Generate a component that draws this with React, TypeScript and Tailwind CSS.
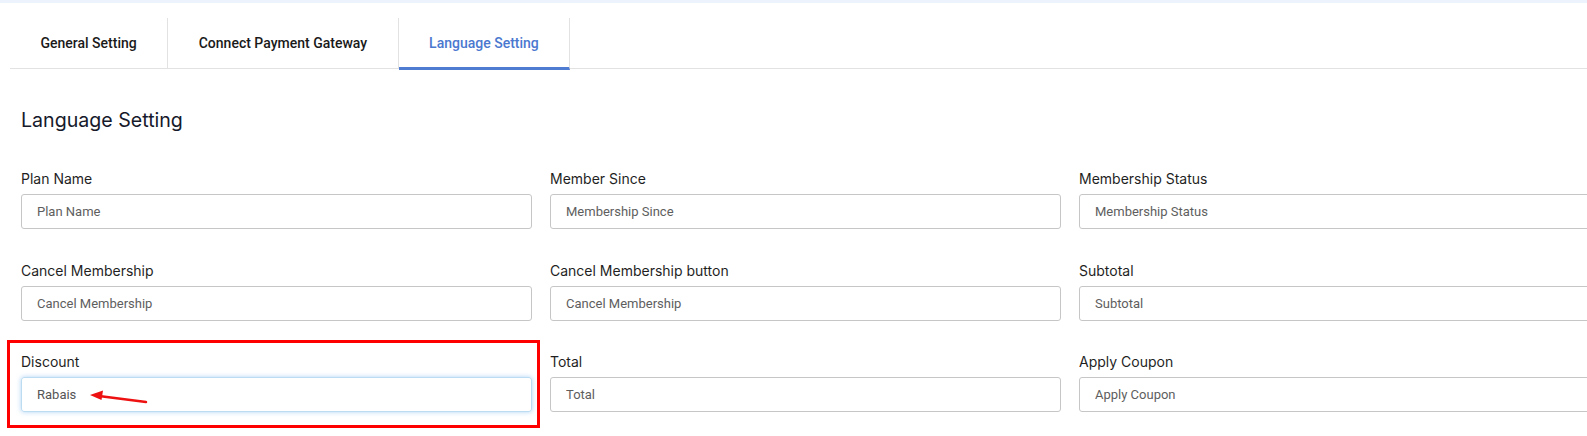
import React from 'react';

type Field = { label: string; placeholder: string; value?: string };

const fields: Field[] = [
  { label: 'Plan Name', placeholder: 'Plan Name' },
  { label: 'Member Since', placeholder: 'Membership Since' },
  { label: 'Membership Status', placeholder: 'Membership Status' },
  { label: 'Cancel Membership', placeholder: 'Cancel Membership' },
  { label: 'Cancel Membership button', placeholder: 'Cancel Membership' },
  { label: 'Subtotal', placeholder: 'Subtotal' },
  { label: 'Discount', placeholder: 'Discount', value: 'Rabais' },
  { label: 'Total', placeholder: 'Total' },
  { label: 'Apply Coupon', placeholder: 'Apply Coupon' },
];

const tabs = ['General Setting', 'Connect Payment Gateway', 'Language Setting'];

const SettingField: React.FC<{ field: Field }> = ({ field }) => {
  const focused = field.value !== undefined;
  return (
    <div className="flex flex-col">
      <label className="text-[14px] leading-[20px] text-[#1f1f1f] mb-[5px] font-['Inter',sans-serif]">
        {field.label}
      </label>
      <input
        readOnly
        value={field.value ?? ''}
        placeholder={field.placeholder}
        className={
          focused
            ? "h-[35px] w-full rounded-[3px] border border-[#bcdcf2] pl-[15px] text-[13px] text-[#555] outline-none shadow-[0_0_5px_rgba(110,175,235,0.55)] font-['Roboto',sans-serif]"
            : "h-[35px] w-full rounded-[3px] border border-[#c6c6c6] pl-[15px] text-[13px] text-[#555] outline-none placeholder:text-[#5e5e5e] font-['Roboto',sans-serif]"
        }
      />
    </div>
  );
};

export default function App() {
  return (
    <div className="w-[1587px] h-[436px] bg-white overflow-hidden">
      <div className="h-[3px] bg-[#edf3fd]" />

      {/* Tabs */}
      <div className="flex items-start ml-[10px] mt-[15px] border-b border-[#e2e2e2] font-['Roboto',sans-serif]">
        {tabs.map((t, i) => {
          const active = i === tabs.length - 1;
          return (
            <div
              key={t}
              className={
                active
                  ? 'h-[52px] -mb-[2px] px-[30.5px] flex items-center border-r border-[#e2e2e2] border-b-[3px] border-b-[#4f7bd1] text-[14px] font-medium text-[#4a78cf]'
                  : 'h-[50px] px-[30.5px] flex items-center border-r border-[#e2e2e2] text-[14px] font-medium text-[#1a1a1a]'
              }
            >
              <span className={active ? 'pt-[2px]' : ''}>{t}</span>
            </div>
          );
        })}
      </div>

      {/* Content */}
      <div className="pl-[21px] pt-[37px]">
        <h2 className="text-[19.6px] leading-[28px] font-normal text-[#161a2b] font-['Inter',sans-serif]">
          Language Setting
        </h2>

        <div className="relative mt-[35px] w-[1569px] grid grid-cols-3 gap-x-[18px] gap-y-[31.5px]">
          {fields.map((f) => (
            <SettingField key={f.label} field={f} />
          ))}

          {/* annotation box */}
          <div className="absolute left-[-14px] top-[171px] w-[533px] h-[88px] border-[3px] border-[#ff0000] pointer-events-none" />
          {/* annotation arrow */}
          <svg
            className="absolute left-[60px] top-[215px] pointer-events-none"
            width="80"
            height="24"
            viewBox="0 0 80 24"
          >
            <line x1="65" y1="18" x2="18" y2="12" stroke="#ee1111" strokeWidth="2.5" strokeLinecap="round" />
            <polygon points="9,11 22,6.5 20.5,16" fill="#ee1111" />
          </svg>
        </div>
      </div>
    </div>
  );
}
